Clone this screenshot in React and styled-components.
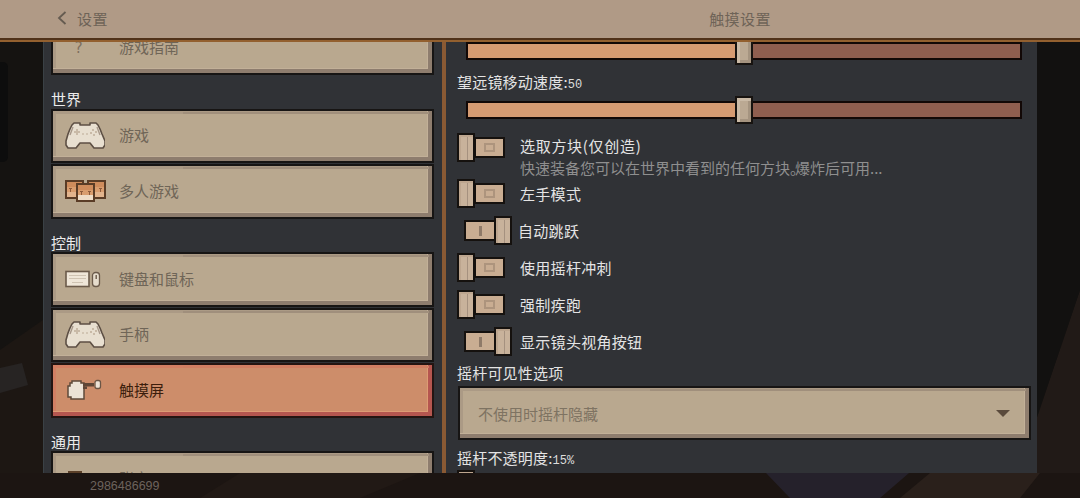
import React from "react";
import styled, { createGlobalStyle, css } from "styled-components";

const Global = createGlobalStyle`
  html, body { margin: 0; padding: 0; background: #141210; }
  * { box-sizing: border-box; }
`;

const cjk = `"Noto Sans CJK SC", "Noto Sans", sans-serif`;

const Page = styled.div`
  position: relative;
  width: 1080px;
  height: 498px;
  overflow: hidden;
  font-family: ${cjk};
  font-size: 15px;
`;

const Backdrop = styled.svg`
  position: absolute;
  inset: 0;
  width: 1080px;
  height: 498px;
`;

const Header = styled.header`
  position: relative;
  z-index: 2;
  display: flex;
  height: 42px;
  background: #b09a86;
  border-bottom: 2px solid #93602f;
  box-shadow: inset 0 -2px 0 #50321a;
  color: #6e6357;
  letter-spacing: 0.4px;
`;

const HeaderLeft = styled.div`
  width: 442px;
  padding: 0 0 4px 57px;
  display: flex;
  align-items: center;
  gap: 10px;
`;

const HeaderTitle = styled.div`
  flex: 0 0 596px;
  padding-bottom: 4px;
  display: flex;
  align-items: center;
  justify-content: center;
`;

const Panel = styled.main`
  position: relative;
  margin: 0 43px;
  height: 431px;
  display: flex;
  background: #303236;
  border-left: 1px solid #3a4145;
`;

const LeftPane = styled.nav`
  width: 398px;
  overflow: hidden;
  padding: 0 8px 0 7px;
`;

const LeftScroll = styled.div`
  margin-top: -21.5px;
`;

const Divider = styled.div`
  width: 4px;
  background: #8a5a34;
`;

const RightPane = styled.section`
  flex: 1;
  overflow: hidden;
  padding: 0 7px 0 11px;
`;

const SectionLabel = styled.div`
  height: 20px;
  line-height: 22px;
  margin: 13px 0 0.5px;
  color: #ececec;
`;

const List = styled.div`
  display: flex;
  flex-direction: column;
  gap: 1px;
`;

const bevel = css`
  border: 2px solid #171514;
  background: #b9a88f;
  box-shadow: inset -4px -4px 0 #8e7d6e, inset -5px -5px 0 #c2b098, inset 3px 3px 0 #ab9a85;
`;

const MenuButton = styled.div`
  ${bevel}
  position: relative;
  height: 54.5px;
  flex: none;
  display: flex;
  align-items: center;
  padding: 0 0 2px 12px;
  color: #6f6557;
  &::after {
    content: "";
    position: absolute;
    top: 1px;
    left: 130px;
    right: 3px;
    height: 2px;
    background: #a08f7c;
  }
  ${(p) =>
    p.$active &&
    css`
      background: #cd8d6a;
      color: #3b1d0c;
      border-color: #241512;
      box-shadow: inset -4px -4px 0 #b5564f, inset -5px -5px 0 #dd9c74, inset 3px 3px 0 #d27f63;
      &::after {
        background: #cf7e62;
      }
    `}
`;

const IconSlot = styled.span`
  flex: 0 0 54px;
  margin-top: 2px;
  display: flex;
  align-items: center;
  color: #7e6f5e;
  svg {
    display: block;
  }
`;

const QuestionGlyph = styled.span`
  padding-left: 9px;
  font-family: "DejaVu Sans Mono", monospace;
  font-size: 15px;
`;

const Setting = styled.div`
  line-height: 20px;
  height: 20px;
  color: #e4e4e4;
  margin: ${(p) => p.$margin || "12px 0 9px"};
  letter-spacing: 0.2px;
`;

const Num = styled.span`
  font-family: "Liberation Mono", monospace;
  font-size: 12px;
  color: #dcdcdc;
  letter-spacing: 0;
`;

const Track = styled.div`
  position: relative;
  width: 556px;
  height: 18px;
  margin-left: 9px;
  border: 2px solid #120806;
  background: #8f5e4f;
`;

const Fill = styled.div`
  height: 100%;
  background: #d69b72;
`;

const Thumb = styled.div`
  position: absolute;
  top: -7px;
  left: 267px;
  width: 18px;
  height: 28px;
  border: 2px solid #171310;
  background: #bba993;
  box-shadow: inset 3px 3px 0 #cabaa6, inset -3px -3px 0 #a59480;
`;

const Row = styled.div`
  display: flex;
  align-items: ${(p) => (p.$top ? "flex-start" : "center")};
  min-height: 29px;
  margin-top: ${(p) => p.$mt ?? 8}px;
  letter-spacing: 0.3px;
`;

const SwitchBox = styled.div`
  position: relative;
  flex: 0 0 63px;
  height: 29px;
`;

const SwitchTrack = styled.div`
  position: absolute;
  top: 4px;
  height: 21px;
  left: ${(p) => (p.$on ? "7px" : "17px")};
  width: ${(p) => (p.$on ? "32px" : "31px")};
  border: 2px solid #15110e;
  background: #c9ad92;
  display: flex;
  align-items: center;
  justify-content: center;
`;

const OffMark = styled.span`
  width: 11px;
  height: 9px;
  border: 2px solid #ad947d;
`;

const OnMark = styled.span`
  width: 3px;
  height: 10px;
  background: #8f7a68;
`;

const SwitchThumb = styled.div`
  position: absolute;
  top: 0;
  left: ${(p) => (p.$on ? "37px" : "0")};
  width: 18px;
  height: 29px;
  border: 2px solid #15110e;
  background: #c8b29b;
  box-shadow: inset 2px 2px 0 #bda68f, inset -5px 0 0 #c8b29b, inset -6px 0 0 #a5917f;
`;

const RowText = styled.div`
  min-width: 0;
  margin-left: ${(p) => (p.$tight ? "-2px" : "0")};
  ${(p) => p.$padded && "padding-top: 2px;"}
`;

const Title = styled.div`
  line-height: 22px;
  color: #e4e4e4;
  letter-spacing: 0.7px;
`;

const RowLabel = styled(RowText)`
  color: #e4e4e4;
`;

const Hint = styled.div`
  line-height: 22px;
  color: #8f8f8f;
  white-space: nowrap;
  letter-spacing: 0;
`;

const Stop = styled.span`
  letter-spacing: -10px;
`;

const Select = styled.div`
  ${bevel}
  position: relative;
  width: 573px;
  height: 54px;
  margin-left: 1px;
  display: flex;
  align-items: center;
  justify-content: space-between;
  padding: 0 19px 0 18px;
  color: #7e7362;
  &::after {
    content: "";
    position: absolute;
    top: 1px;
    left: 190px;
    right: 3px;
    height: 2px;
    background: #a08f7c;
  }
`;

const Caret = styled.span`
  width: 0;
  height: 0;
  border-left: 7px solid transparent;
  border-right: 7px solid transparent;
  border-top: 7px solid #5a4a3c;
`;

const PartialSwitch = styled(SwitchBox)`
  margin-top: 2px;
`;

const Footer = styled.footer`
  position: relative;
  height: 25px;
  padding-left: 90px;
  line-height: 26px;
  font-family: "Liberation Sans", sans-serif;
  font-size: 12.5px;
  color: #6c635d;
`;

const Chevron = () => (
  <svg width="10" height="14" viewBox="0 0 10 14" fill="none">
    <path d="M8.5 1 L2 7 L8.5 13" stroke="#655b50" strokeWidth="1.8" />
  </svg>
);

const Pad = () => (
  <svg width="40" height="28" viewBox="0 0 40 28">
    <path
      d="M9 1h6v2h10V1h6l2 2 2 4 2 5 3 7v4l-2 3h-9l-4-5H15l-4 5H3l-2-3v-4l2-7 2-5 2-4z"
      fill="#e8dfd0"
      stroke="#5d4f44"
      strokeWidth="1.6"
      strokeLinejoin="round"
    />
    <path d="M8 5L5 13" stroke="#a8988a" strokeWidth="1.4" />
    <path d="M32 5L35 13" stroke="#a8988a" strokeWidth="1.4" />
    <path d="M11 7h2v2h2v2h-2v2h-2v-2H9V9h2zM27 7h2v2h-2zM30 9h2v2h-2zM25 10h2v2h-2zM28 12h2v2h-2z" fill="#c9baa7" />
    <path d="M17 11h2v2h-2zM21 11h2v2h-2z" fill="#d2c5b3" />
  </svg>
);

const Head = ({ x, y, front }) => (
  <g transform={`translate(${x} ${y})`}>
    <rect x="1" y="1" width="17" height="17" fill="#d99d6e" stroke="#5a3c26" strokeWidth="2" />
    <rect x="2" y="2" width="15" height="5" fill="#cf8c5c" />
    <path d="M4 8h3v1H4zM12 8h3v1h-3zM5 9h1v3H5zM13 9h1v3h-1z" fill="#8d5a3a" />
    <rect x="2" y="12" width="15" height="5" fill={front ? "#efdcc6" : "#e2b48d"} />
  </g>
);

const Heads = () => (
  <svg width="41" height="22" viewBox="0 0 41 22">
    <Head x={0} y={0} />
    <Head x={22} y={0} />
    <Head x={11} y={3} front />
  </svg>
);

const Keys = () => (
  <svg width="36" height="18" viewBox="0 0 36 18">
    <rect x="1" y="1.5" width="23" height="15" fill="#efe6d8" stroke="#6b5a4a" strokeWidth="1.6" />
    <path d="M4 5h17v1H4zM4 8h17v1H4zM7 12h11v1H7z" fill="#cfc3b2" />
    <rect x="27.5" y="2.5" width="7" height="14" rx="3" fill="#e6dccc" stroke="#6b5a4a" strokeWidth="1.3" />
    <rect x="30.5" y="5" width="1.4" height="4" fill="#6b5a4a" />
  </svg>
);

const Hand = () => (
  <svg width="36" height="22" viewBox="0 0 36 22" style={{ marginLeft: 2 }}>
    <path d="M5 2h9v2h3v16H4v-2H1V7h2V4h2z" fill="#ece3d6" stroke="#5e4a3a" strokeWidth="1.5" />
    <rect x="16" y="4" width="11" height="3.5" fill="#5e4636" />
    <rect x="16" y="7.5" width="4" height="2.5" fill="#5e4636" />
    <rect x="28" y="1.5" width="5.5" height="8" rx="2" fill="#ece3d6" stroke="#6b5646" strokeWidth="1.3" />
  </svg>
);

const Block = () => (
  <svg width="14" height="22" viewBox="0 0 14 22" style={{ marginLeft: 3, marginTop: 7 }}>
    <rect x="1" y="1" width="12" height="20" fill="#c9a87e" stroke="#5a3f28" strokeWidth="2" />
  </svg>
);

const Switch = ({ on }) => (
  <SwitchBox>
    <SwitchTrack $on={on}>{on ? <OnMark /> : <OffMark />}</SwitchTrack>
    <SwitchThumb $on={on} />
  </SwitchBox>
);

const Item = ({ icon, children, active }) => (
  <MenuButton $active={active}>
    <IconSlot>{icon}</IconSlot>
    {children}
  </MenuButton>
);

const Slider = () => (
  <Track>
    <Fill style={{ width: "50%" }} />
    <Thumb />
  </Track>
);

export default function App() {
  return (
    <Page>
      <Global />
      <Backdrop viewBox="0 0 1080 498">
        <rect width="1080" height="498" fill="#151311" />
        <rect x="-8" y="62" width="16" height="100" rx="5" fill="#0d0d0d" />
        <path d="M0 350L43 320V498H0z" fill="#1d1713" />
        <path d="M0 368L22 363L28 385L0 393z" fill="#272423" />
        <path d="M1080 290L1037 417V498H1080z" fill="#211a17" />
        <path d="M1037 42H1058L1080 42V290L1037 417z" fill="#121110" />
        <path d="M0 473H1080V498H0z" fill="#1c1512" />
        <path d="M766 473H909L880 498H790z" fill="#25212b" />
        <path d="M930 473H1040L1020 498H900z" fill="#2a201b" />
        <path d="M240 473H420L360 498H200z" fill="#211915" />
      </Backdrop>

      <Header>
        <HeaderLeft>
          <Chevron />
          设置
        </HeaderLeft>
        <HeaderTitle>触摸设置</HeaderTitle>
      </Header>

      <Panel>
        <LeftPane>
          <LeftScroll>
            <Item icon={<QuestionGlyph>?</QuestionGlyph>}>游戏指南</Item>
            <SectionLabel>世界</SectionLabel>
            <List>
              <Item icon={<Pad />}>游戏</Item>
              <Item icon={<Heads />}>多人游戏</Item>
            </List>
            <SectionLabel>控制</SectionLabel>
            <List>
              <Item icon={<Keys />}>键盘和鼠标</Item>
              <Item icon={<Pad />}>手柄</Item>
              <Item active icon={<Hand />}>触摸屏</Item>
            </List>
            <SectionLabel>通用</SectionLabel>
            <List>
              <Item icon={<Block />}>账户</Item>
            </List>
          </LeftScroll>
        </LeftPane>
        <Divider />
        <RightPane>
          <Slider />
          <Setting>
            望远镜移动速度:<Num>50</Num>
          </Setting>
          <Slider />
          <Row $top $mt={14}>
            <Switch />
            <RowText $padded>
              <Title>选取方块(仅创造)</Title>
              <Hint>
                快速装备您可以在世界中看到的任何方块<Stop>。</Stop>爆炸后可用...
              </Hint>
            </RowText>
          </Row>
          <Row $mt={0}>
            <Switch />
            <RowLabel>左手模式</RowLabel>
          </Row>
          <Row>
            <Switch on />
            <RowLabel $tight>自动跳跃</RowLabel>
          </Row>
          <Row>
            <Switch />
            <RowLabel>使用摇杆冲刺</RowLabel>
          </Row>
          <Row>
            <Switch />
            <RowLabel>强制疾跑</RowLabel>
          </Row>
          <Row>
            <Switch on />
            <RowLabel>显示镜头视角按钮</RowLabel>
          </Row>
          <Setting $margin="7px 0 3px">摇杆可见性选项</Setting>
          <Select>
            不使用时摇杆隐藏
            <Caret />
          </Select>
          <Setting $margin="8px 0 0">
            摇杆不透明度:<Num>15%</Num>
          </Setting>
          <PartialSwitch>
            <SwitchThumb />
          </PartialSwitch>
        </RightPane>
      </Panel>

      <Footer>2986486699</Footer>
    </Page>
  );
}
